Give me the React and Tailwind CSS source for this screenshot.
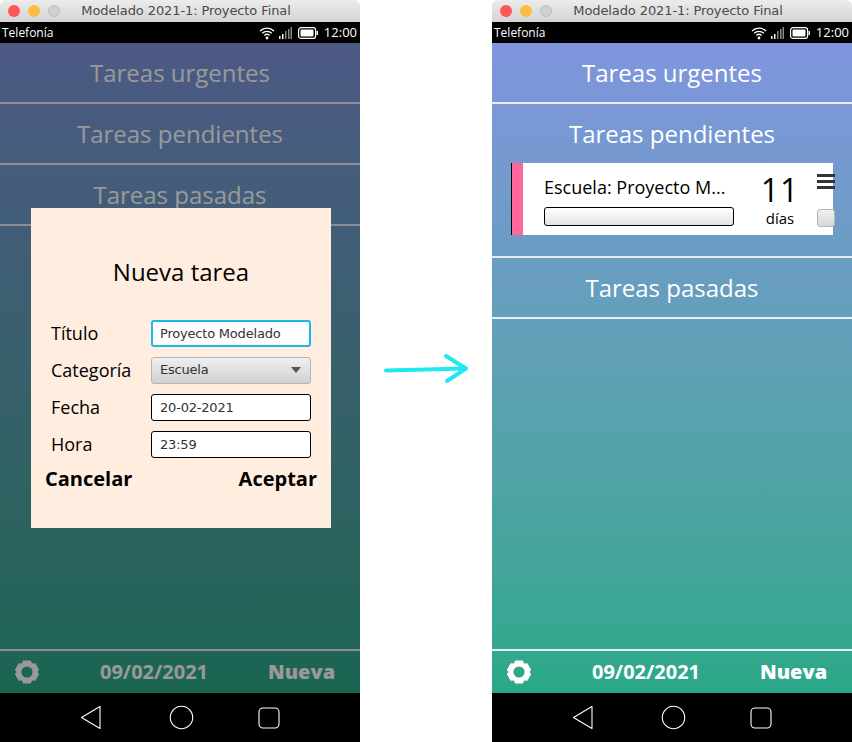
import { useState } from "react";

function WifiIcon() {
  return (
    <svg width="16" height="14" viewBox="0 0 16 14" fill="none" stroke="white" strokeWidth="1.3">
      <path d="M1 5 A10 10 0 0 1 15 5" />
      <path d="M3.2 7.2 A7 7 0 0 1 12.8 7.2" />
      <path d="M5.4 9.4 A4 4 0 0 1 10.6 9.4" />
      <circle cx="8" cy="12" r="1.4" fill="white" stroke="none" />
    </svg>
  );
}

function SignalIcon() {
  return (
    <svg width="13" height="12" viewBox="0 0 13 12">
      <rect x="0" y="9" width="1.5" height="3" fill="#fff" />
      <rect x="3" y="7" width="1.5" height="5" fill="#fff" />
      <rect x="6" y="4" width="1.5" height="8" fill="#888" />
      <rect x="9" y="2" width="1.5" height="10" fill="#888" />
      <rect x="11.5" y="0" width="1.5" height="12" fill="#888" />
    </svg>
  );
}

function BatteryIcon() {
  return (
    <svg width="20" height="12" viewBox="0 0 20 12">
      <rect x="0.6" y="0.6" width="17" height="10.8" rx="2.5" fill="none" stroke="white" strokeWidth="1.2" />
      <rect x="2.5" y="2.5" width="13" height="7" rx="1" fill="white" />
      <rect x="18.5" y="4" width="1.5" height="4" fill="white" />
    </svg>
  );
}

function GearIcon() {
  return (
    <svg width="26" height="26" viewBox="0 0 26 26" className="text-white">
      <path
        fill="currentColor"
        fillRule="evenodd"
        d="M9.2 1.6 L16.8 1.6 L18.2 4.6 L21.4 4.3 L25.2 10.9 L23.3 13 L25.2 15.1 L21.4 21.7 L18.2 21.4 L16.8 24.4 L9.2 24.4 L7.8 21.4 L4.6 21.7 L0.8 15.1 L2.7 13 L0.8 10.9 L4.6 4.3 L7.8 4.6 Z M13 7.4 A5.6 5.6 0 1 0 13 18.6 A5.6 5.6 0 1 0 13 7.4 Z"
      />
    </svg>
  );
}

function NavBar() {
  return (
    <div className="h-[49px] bg-black flex items-center shrink-0 pl-[80px]">
      <svg width="21" height="25" viewBox="0 0 21 25" fill="none" stroke="white" strokeWidth="1.1" strokeLinejoin="round">
        <path d="M20 1.5 L1.5 12.5 L20 23.5 Z" />
      </svg>
      <svg width="25" height="25" viewBox="0 0 25 25" fill="none" stroke="white" strokeWidth="1.1" className="ml-[68px]">
        <circle cx="12.5" cy="12.5" r="11.2" />
      </svg>
      <svg width="22" height="22" viewBox="0 0 22 22" fill="none" stroke="white" strokeWidth="1.1" className="ml-[64px]">
        <rect x="1" y="1" width="20" height="20" rx="4" />
      </svg>
    </div>
  );
}

function SectionRow({ title, children }) {
  return (
    <div className="border-b-2 border-[#e9edf3]">
      <div className="h-[59px] flex items-center justify-center text-[24px] text-white">{title}</div>
      {children}
    </div>
  );
}

function TaskCard() {
  return (
    <div className="mx-[19px] mt-0 mb-[21px] h-[72px] bg-white flex">
      <div className="w-[12px] bg-[#ff6699] border-l border-black shrink-0" />
      <div className="pl-[21px] pt-[12px] w-[222px] shrink-0">
        <div className="text-[18px] leading-[24px] text-black whitespace-nowrap">Escuela: Proyecto M...</div>
        <div className="mt-[8px] h-[19px] w-[190px] rounded-[3px] border border-black bg-gradient-to-b from-white to-[#e4e4e4]" />
      </div>
      <div className="w-[70px] shrink-0 flex flex-col items-center">
        <div className="text-[32px] leading-[32px] mt-[11px] text-black tracking-[1px]">11</div>
        <div className="text-[15px] leading-[20px] mt-[2px] text-black">días</div>
      </div>
      <div className="flex flex-col items-center ml-[2px]">
        <div className="mt-[11px] w-[18px] flex flex-col gap-[3px]">
          <div className="h-[3px] bg-[#333]" />
          <div className="h-[3px] bg-[#333]" />
          <div className="h-[3px] bg-[#333]" />
        </div>
        <div className="mt-[20px] w-[18px] h-[18px] rounded-[3px] border border-[#b5b5b5] bg-gradient-to-b from-[#f0f0f0] to-[#d8d8d8]" />
      </div>
    </div>
  );
}

function FormRow({ label, children }) {
  return (
    <div className="flex items-center h-[28px] mb-[9px]">
      <div className="w-[100px] text-[18px] text-black leading-[24px]">{label}</div>
      <div className="w-[160px]">{children}</div>
    </div>
  );
}

function NewTaskDialog({ titulo, setTitulo }) {
  const inputClass =
    "w-full h-[27px] rounded-[3px] border border-black bg-white px-[8px] text-[13px] text-[#333] outline-none font-['DejaVu_Sans',sans-serif] tracking-[-0.2px]";

  return (
    <div className="absolute left-[31px] top-[165px] w-[300px] h-[320px] bg-[#ffeddf] flex flex-col">
      <div className="text-[24px] text-black text-center mt-[47px] leading-[34px] ml-[0px]">Nueva tarea</div>
      <div className="pl-[20px] mt-[30px]">
        <FormRow label="Título">
          <input
            value={titulo}
            onChange={(e) => setTitulo(e.target.value)}
            className="w-full h-[27px] rounded-[3px] border-2 border-[#1bb8ea] bg-white px-[7px] text-[13px] text-[#333] outline-none font-['DejaVu_Sans',sans-serif] tracking-[-0.2px]"
          />
        </FormRow>
        <FormRow label="Categoría">
          <div className="h-[27px] rounded-[3px] border border-[#b5b5b5] bg-gradient-to-b from-[#f0f0f0] to-[#d0d0d0] px-[8px] flex items-center justify-between text-[13px] text-[#333] font-['DejaVu_Sans',sans-serif] tracking-[-0.2px]">
            <span>Escuela</span>
            <span className="w-0 h-0 mr-[1px] border-l-[5px] border-r-[5px] border-t-[6px] border-l-transparent border-r-transparent border-t-[#555]" />
          </div>
        </FormRow>
        <FormRow label="Fecha">
          <input defaultValue="20-02-2021" className={inputClass} />
        </FormRow>
        <FormRow label="Hora">
          <input defaultValue="23:59" className={inputClass} />
        </FormRow>
      </div>
      <div className="flex justify-between pl-[14px] pr-[14px] mt-[-2px] text-[20px] font-bold text-black leading-[28px]">
        <span>Cancelar</span>
        <span>Aceptar</span>
      </div>
    </div>
  );
}

function PhoneWindow({ dimmed, children }) {
  const [titulo, setTitulo] = useState("Proyecto Modelado");
  const red = dimmed ? "bg-[#fc5753]" : "bg-[#fc5753]";

  return (
    <div className="w-[360px] h-[742px] flex flex-col rounded-t-[6px] overflow-hidden shrink-0">
      <div className="h-[22px] shrink-0 bg-gradient-to-b from-[#ececec] to-[#d4d4d4] flex items-center relative">
        <div className="flex gap-[8px] pl-[8px]">
          <div className={`w-[12px] h-[12px] rounded-full ${red}`} />
          <div className="w-[12px] h-[12px] rounded-full bg-[#fdbc40]" />
          <div className="w-[12px] h-[12px] rounded-full bg-[#d0d0d0] border border-[#bdbdbd]" />
        </div>
        <div className="absolute inset-0 flex items-center justify-center text-[13px] tracking-[-0.1px] text-[#4a4a4a] font-['DejaVu_Sans',sans-serif] pl-[12px]">
          Modelado 2021-1: Proyecto Final
        </div>
      </div>

      <div className="h-[21px] shrink-0 bg-black flex items-center justify-between pl-[2px] pr-[3px] text-white text-[12px]">
        <span>Telefonía</span>
        <div className="flex items-center gap-[4px]">
          <WifiIcon />
          <SignalIcon />
          <span className="ml-[2px]"><BatteryIcon /></span>
          <span className="ml-[2px] text-[13px]">12:00</span>
        </div>
      </div>

      <div className="flex-1 relative flex flex-col bg-gradient-to-b from-[#8095de] to-[#2aa888]">
        <div className="flex-1">{children}</div>
        <div className="h-[44px] shrink-0 border-t-2 border-[#e9edf3] flex items-center text-white font-bold">
          <div className="ml-[14px] w-[26px]"><GearIcon /></div>
          <div className="ml-[60px] text-[20px] leading-[26px] w-[106px] text-center whitespace-nowrap">09/02/2021</div>
          <div className="ml-[62px] text-[20px] leading-[26px] font-extrabold">Nueva</div>
        </div>
        {dimmed && <div className="absolute inset-0 bg-black/40" />}
        {dimmed && <NewTaskDialog titulo={titulo} setTitulo={setTitulo} />}
      </div>

      <NavBar />
    </div>
  );
}

export default function App() {
  return (
    <div className="w-[852px] h-[742px] bg-white flex font-['Open_Sans',sans-serif]">
      <PhoneWindow dimmed>
        <SectionRow title="Tareas urgentes" />
        <SectionRow title="Tareas pendientes" />
        <SectionRow title="Tareas pasadas" />
      </PhoneWindow>

      <div className="w-[132px] shrink-0 flex items-center justify-center pb-[5px]">
        <svg width="100" height="40" viewBox="0 0 100 40" fill="none" stroke="#1fe8ee" strokeWidth="4" strokeLinecap="round" strokeLinejoin="round" className="mr-[0px]">
          <path d="M10 21.5 L89 19.5" />
          <path d="M70 7 L90 19.5 L71 32" />
        </svg>
      </div>

      <PhoneWindow>
        <SectionRow title="Tareas urgentes" />
        <SectionRow title="Tareas pendientes">
          <TaskCard />
        </SectionRow>
        <SectionRow title="Tareas pasadas" />
      </PhoneWindow>
    </div>
  );
}
